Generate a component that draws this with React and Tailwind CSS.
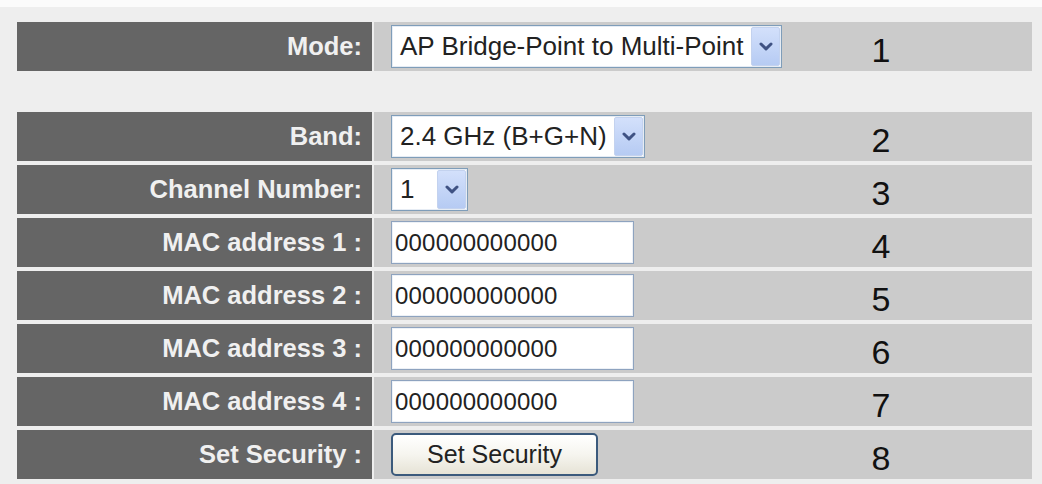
import React from "react";

const font = "font-['Liberation_Sans',Arial,sans-serif]";

function Chevron() {
  return (
    <svg width="14" height="9" viewBox="0 0 14 9" className="block">
      <path d="M2 2 L7 6.8 L12 2" fill="none" stroke="#3f5283" strokeWidth="3" strokeLinecap="round" strokeLinejoin="round" />
    </svg>
  );
}

function Select({ text, width }) {
  return (
    <div
      className="h-[43px] flex items-stretch border border-[#7f9db9] bg-white p-[1px] shadow-[inset_0_0_0_1px_#e6ecf4]"
      style={{ width }}
    >
      <div className={`flex-1 flex items-center pl-[7px] text-[26px] text-[#222] whitespace-nowrap overflow-hidden ${font}`}>
        {text}
      </div>
      <div className="w-[29px] flex items-center justify-center bg-gradient-to-b from-[#d3e0fb] to-[#b6cbf3] border border-[#c3d2ef] rounded-[2px]">
        <Chevron />
      </div>
    </div>
  );
}

function TextInput() {
  return (
    <div className="w-[243px] h-[43px] flex items-center border border-[#8ea3bf] bg-white pl-[3px] shadow-[inset_0_0_0_1px_#edf1f6]">
      <span className={`text-[24px] text-[#222] tracking-[0.2px] ${font}`}>000000000000</span>
    </div>
  );
}

function Button() {
  return (
    <div className="w-[207px] h-[43px] flex items-center justify-center rounded-[5px] border-2 border-[#3b5a7c] bg-gradient-to-b from-white via-[#f6f5ef] to-[#e6e3d6]">
      <span className={`text-[25px] text-[#222] ${font}`}>Set Security</span>
    </div>
  );
}

function Row({ label, num, children }) {
  return (
    <div className="flex h-[49px] gap-[2px]">
      <div className={`w-[355px] bg-[#656565] flex items-center justify-end pr-[10px] text-[25.5px] font-bold text-[#f0f0f0] whitespace-nowrap ${font}`}>
        {label}
      </div>
      <div className="flex-1 bg-[#cbcbcb] flex items-center">
        <div className="w-[468px] pl-[17px] flex items-center">{children}</div>
        <div className={`w-[78px] text-center text-[34px] leading-none text-[#111] pt-[6px] ${font}`}>{num}</div>
      </div>
    </div>
  );
}

export default function App() {
  return (
    <div className="w-[1042px] h-[484px] bg-[#fbfbfb] pt-[7px] overflow-hidden">
      <div className="bg-[#eeeeee] h-full pl-[17px] pr-[10px] pt-[15px]">
        <Row label="Mode:" num="1">
          <Select text="AP Bridge-Point to Multi-Point" width={391} />
        </Row>
        <div className="h-[41px]" />
        <div className="flex flex-col gap-[4px]">
          <Row label="Band:" num="2">
            <Select text="2.4 GHz (B+G+N)" width={254} />
          </Row>
          <Row label="Channel Number:" num="3">
            <Select text="1" width={77} />
          </Row>
          <Row label="MAC address 1 :" num="4">
            <TextInput />
          </Row>
          <Row label="MAC address 2 :" num="5">
            <TextInput />
          </Row>
          <Row label="MAC address 3 :" num="6">
            <TextInput />
          </Row>
          <Row label="MAC address 4 :" num="7">
            <TextInput />
          </Row>
          <Row label="Set Security :" num="8">
            <Button />
          </Row>
        </div>
      </div>
    </div>
  );
}
